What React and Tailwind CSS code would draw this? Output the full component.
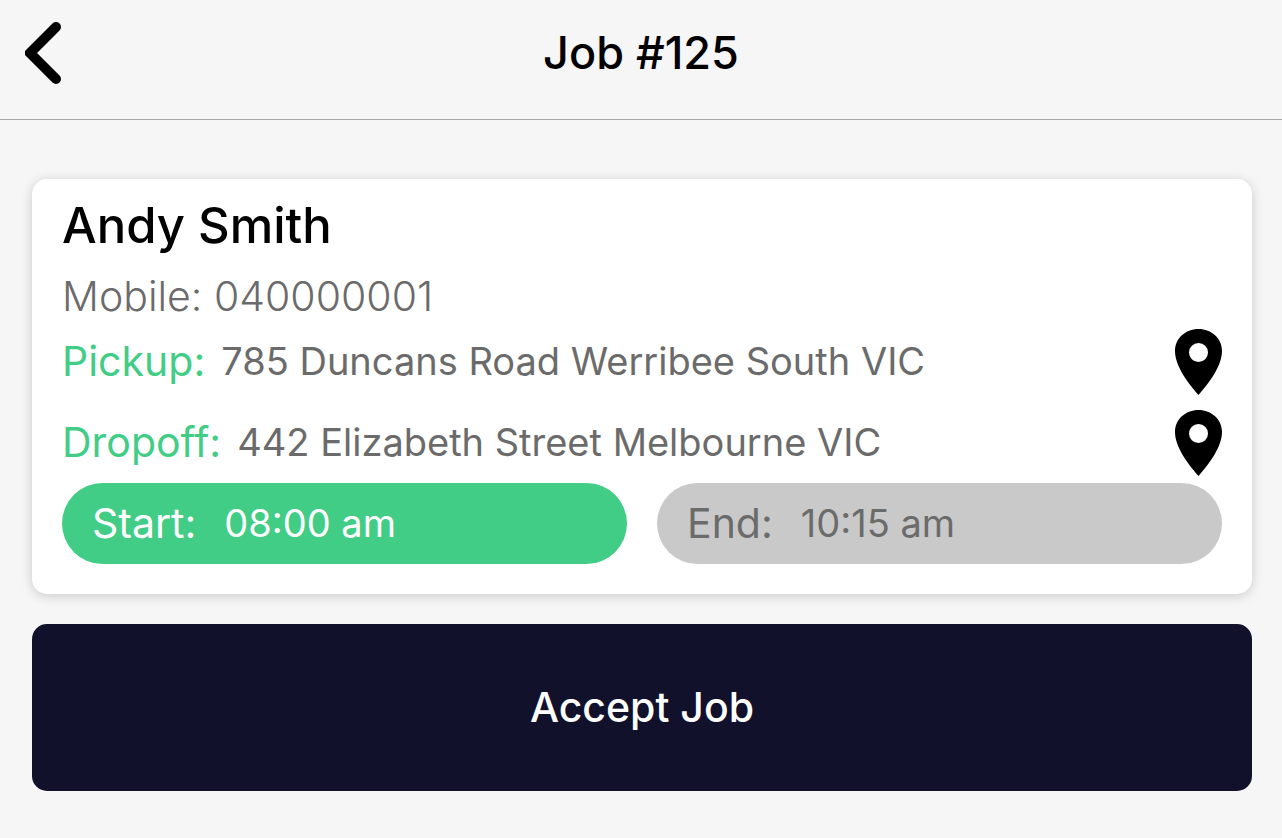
const BackIcon = () => (
  <svg width="36" height="62" viewBox="0 0 36 62" fill="none" aria-hidden="true">
    <path d="M31 5 5 31l26 26" stroke="black" strokeWidth="10" strokeLinecap="round" strokeLinejoin="miter" />
  </svg>
);

const PinIcon = () => (
  <svg width="47" height="66" viewBox="0 0 47 66" aria-hidden="true">
    <path
      fillRule="evenodd"
      d="M23.500 0C10.500 0 0 9.500 0 22C0 37 13 54 23.500 66C34 54 47 37 47 22C47 9.500 36.500 0 23.500 0Zm0 33a9.500 9.500 0 1 1 0-19 9.500 9.500 0 0 1 0 19Z"
    />
  </svg>
);

const stops = [
  { label: 'Pickup:', address: '785 Duncans Road Werribee South VIC' },
  { label: 'Dropoff:', address: '442 Elizabeth Street Melbourne VIC' }
];

const App = () => {
  return (
    <div className="min-h-screen bg-[#f6f6f6] font-['Inter',sans-serif] text-black">
      <header className="grid grid-cols-[1fr_auto_1fr] h-30 px-[25px] pb-3.5 items-center border-b border-[#a7a7a7]">
        <button type="button" aria-label="Back" className="justify-self-start">
          <BackIcon />
        </button>
        <h1 className="text-[45px] font-medium">Job #125</h1>
      </header>

      <main className="flex flex-col gap-[30px] pt-[59px] pl-8 pr-[30px]">
        <section className="bg-white rounded-[15px] shadow-[0_2px_12px_rgba(0,0,0,0.18)] px-[30px] pt-4 pb-[30px]">
          <h2 className="text-[49px] leading-[62px] font-medium">Andy Smith</h2>
          <p className="mt-3.5 text-[41px] leading-[50px] font-light text-[#6b6b6b]">Mobile: 040000001</p>

          {stops.map(({ label, address }) => (
            <div key={label} className="flex items-center h-[81px]">
              <span className="text-[41px] text-[#42cd86]">{label}</span>
              <span className="ml-4 text-[38px] text-[#6b6b6b]">{address}</span>
              <button type="button" aria-label={`Map for ${address}`} className="ml-auto">
                <PinIcon />
              </button>
            </div>
          ))}

          <div className="grid grid-cols-2 gap-[30px]">
            <div className="flex items-center h-[81px] px-[30px] gap-7 rounded-full bg-[#42cd86] text-white">
              <span className="text-[41px]">Start:</span>
              <span className="text-[38px]">08:00 am</span>
            </div>
            <div className="flex items-center h-[81px] px-[30px] gap-7 rounded-full bg-[#c9c9c9] text-[#6b6b6b]">
              <span className="text-[41px]">End:</span>
              <span className="text-[38px]">10:15 am</span>
            </div>
          </div>
        </section>

        <button type="button" className="h-[167px] rounded-[15px] bg-[#11112b] text-white text-[41px] font-medium">
          Accept Job
        </button>
      </main>
    </div>
  );
};

export default App;
